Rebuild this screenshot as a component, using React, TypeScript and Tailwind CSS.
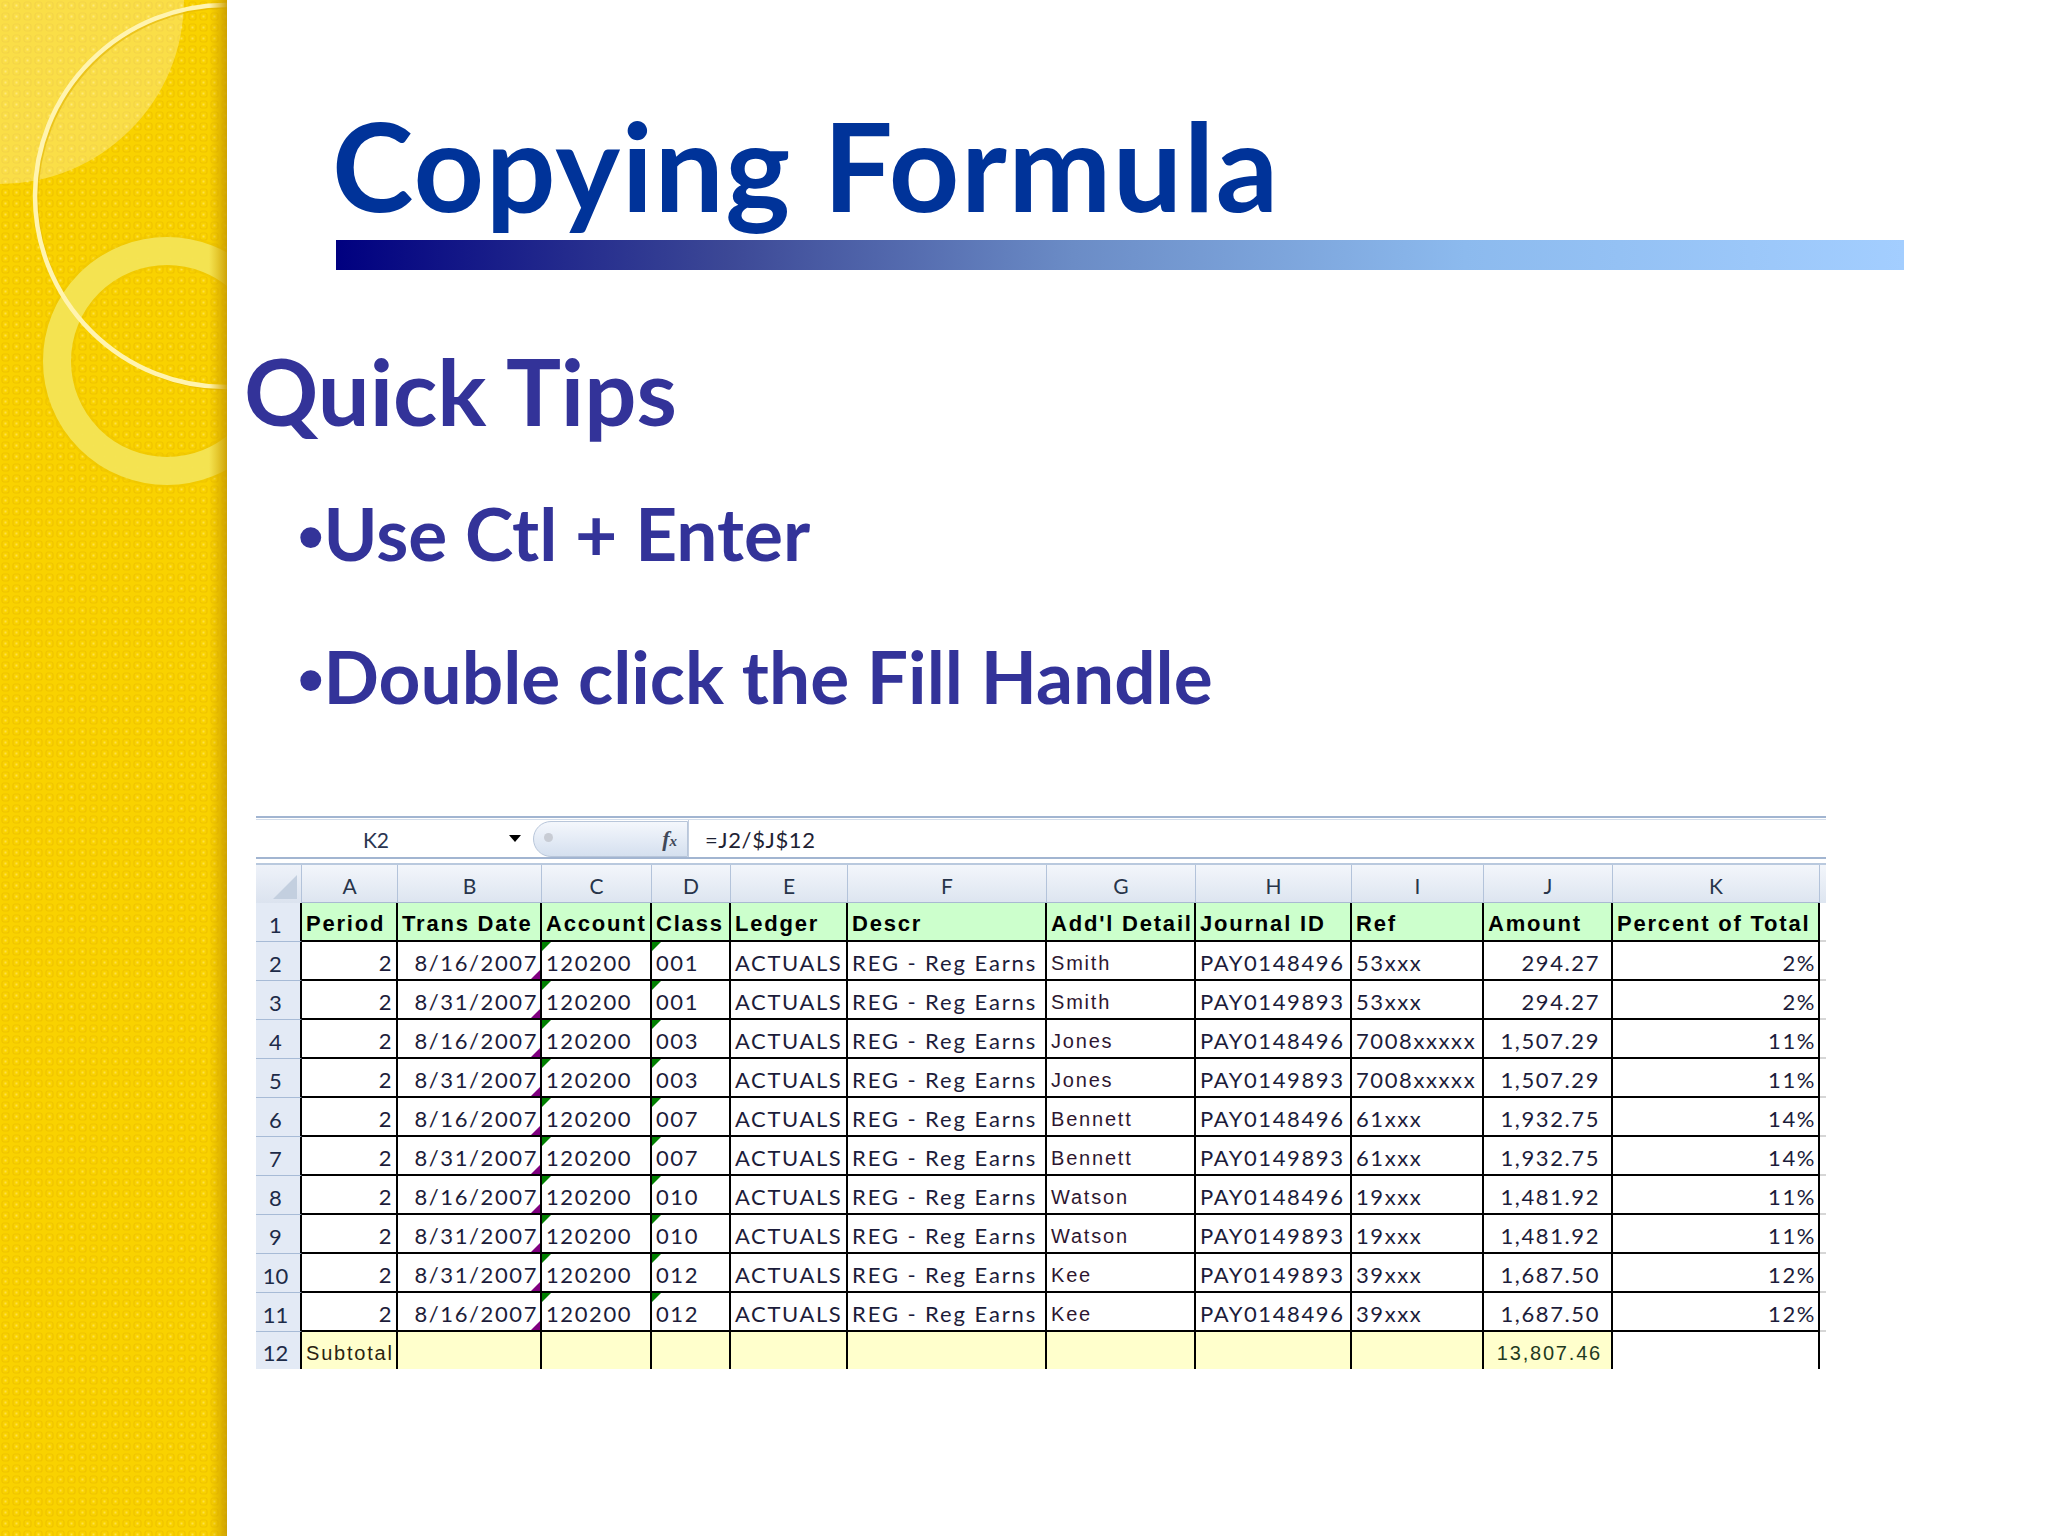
import clsx from "clsx";

type Row = {
  date: string;
  cls: string;
  detail: string;
  journal: string;
  ref: string;
  amount: string;
  pct: string;
};

const rows: Row[] = [
  { date: "8/16/2007", cls: "001", detail: "Smith", journal: "PAY0148496", ref: "53xxx", amount: "294.27", pct: "2%" },
  { date: "8/31/2007", cls: "001", detail: "Smith", journal: "PAY0149893", ref: "53xxx", amount: "294.27", pct: "2%" },
  { date: "8/16/2007", cls: "003", detail: "Jones", journal: "PAY0148496", ref: "7008xxxxx", amount: "1,507.29", pct: "11%" },
  { date: "8/31/2007", cls: "003", detail: "Jones", journal: "PAY0149893", ref: "7008xxxxx", amount: "1,507.29", pct: "11%" },
  { date: "8/16/2007", cls: "007", detail: "Bennett", journal: "PAY0148496", ref: "61xxx", amount: "1,932.75", pct: "14%" },
  { date: "8/31/2007", cls: "007", detail: "Bennett", journal: "PAY0149893", ref: "61xxx", amount: "1,932.75", pct: "14%" },
  { date: "8/16/2007", cls: "010", detail: "Watson", journal: "PAY0148496", ref: "19xxx", amount: "1,481.92", pct: "11%" },
  { date: "8/31/2007", cls: "010", detail: "Watson", journal: "PAY0149893", ref: "19xxx", amount: "1,481.92", pct: "11%" },
  { date: "8/31/2007", cls: "012", detail: "Kee", journal: "PAY0149893", ref: "39xxx", amount: "1,687.50", pct: "12%" },
  { date: "8/16/2007", cls: "012", detail: "Kee", journal: "PAY0148496", ref: "39xxx", amount: "1,687.50", pct: "12%" },
];

const headers = ["Period", "Trans Date", "Account", "Class", "Ledger", "Descr", "Add'l Detail", "Journal ID", "Ref", "Amount", "Percent of Total"];
const letters = ["A", "B", "C", "D", "E", "F", "G", "H", "I", "J", "K"];

const gridCols = "grid grid-cols-[46px_96px_144px_110px_79px_117px_199px_149px_156px_132px_129px_207px_6px]";

function Sidebar() {
  return (
    <div className="relative w-[227px] shrink-0 h-full bg-[#f8d000]">
      <svg width="227" height="1536" viewBox="0 0 227 1536" className="block">
        <defs>
          <pattern id="dots" width="11" height="11" patternUnits="userSpaceOnUse">
            <rect width="11" height="11" fill="#f9d200" />
            <rect x="2" y="2" width="7" height="7" rx="2" fill="none" stroke="#f0c400" strokeWidth="1.2" />
            <rect x="4.5" y="4.5" width="2" height="2" fill="#fde04a" />
          </pattern>
          <linearGradient id="edge" x1="0" x2="1" y1="0" y2="0">
            <stop offset="0" stopColor="#d9ab00" stopOpacity="0" />
            <stop offset="1" stopColor="#c99c00" stopOpacity="0.9" />
          </linearGradient>
        </defs>
        <rect width="227" height="1536" fill="url(#dots)" />
        <circle cx="0" cy="0" r="184" fill="#ffffff" opacity="0.28" />
        <circle cx="167" cy="361" r="110" fill="none" stroke="#eec700" strokeWidth="33" opacity="0.6" />
        <circle cx="167" cy="361" r="110" fill="none" stroke="#f4e65a" strokeWidth="28" opacity="0.9" />
        <circle cx="228" cy="198" r="191" fill="none" stroke="#e3b400" strokeWidth="3" opacity="0.6" />
        <circle cx="226" cy="196" r="191" fill="none" stroke="#fff4b0" strokeWidth="4.5" />
        <rect x="209" width="18" height="1536" fill="url(#edge)" />
      </svg>
    </div>
  );
}

function Triangle({ pos, color }: { pos: "tl" | "br"; color: string }) {
  return (
    <div
      className={clsx(
        "absolute w-[9px] h-[9px]",
        pos === "tl" ? "left-0 top-0 [clip-path:polygon(0_0,100%_0,0_100%)]" : "right-0 bottom-0 [clip-path:polygon(100%_0,100%_100%,0_100%)]",
        color
      )}
    />
  );
}

function Cell({
  children,
  right,
  last,
  className,
}: {
  children?: React.ReactNode;
  right?: boolean;
  last?: boolean;
  className?: string;
}) {
  return (
    <div
      className={clsx(
        "relative flex items-center overflow-hidden whitespace-nowrap border-r-2 border-black pl-[4px] pt-[4px]",
        !last && "border-b-2",
        right && "justify-end",
        className
      )}
    >
      {children}
    </div>
  );
}

function RowNum({ n, last }: { n: number; last?: boolean }) {
  return (
    <div
      className={clsx(
        "flex items-center justify-center pr-[5px] pt-[4px] bg-[#e3eaf5] border-r-2 border-r-black text-[22px] text-[#1d2b48] font-['Lato',sans-serif]",
        !last && "border-b border-b-[#a7bbd6]"
      )}
    >
      {n}
    </div>
  );
}

function Sheet() {
  const data = "font-['Lato',sans-serif] text-[22px] tracking-[1.6px] text-[#1c1c3a]";
  const tahoma = "font-['Liberation_Sans',Arial,sans-serif] text-[20px] tracking-[1.8px]";
  return (
    <div className="ml-[29px] w-[1570px] bg-white">
      {/* formula bar */}
      <div className="h-[4px] border-t-2 border-[#a2b5d1] border-b border-b-[#d2dcea]" />
      <div className="h-[37px] flex items-center font-['Lato',sans-serif]">
        <div className="w-[277px] h-full flex items-center">
          <span className="w-[240px] text-center text-[21px] text-[#2a3550] pt-[2px]">K2</span>
          <span className="ml-[13px] w-0 h-0 border-l-[6px] border-r-[6px] border-t-[7px] border-l-transparent border-r-transparent border-t-black" />
        </div>
        <div className="relative w-[155px] h-[36px] rounded-l-[20px] border border-[#b8c6da] bg-linear-to-b from-[#f4f7fc] to-[#d5e0ef] flex items-center justify-end pr-[10px]">
          <span className="absolute left-[10px] top-[11px] w-[9px] h-[9px] rounded-full bg-[#c8ccd4]" />
          <span className="font-['Liberation_Serif',serif] italic font-bold text-[22px] text-[#404858]">
            f<span className="text-[15px]">x</span>
          </span>
        </div>
        <div className="flex-1 h-full flex items-center pl-[16px] pt-[2px] border-l border-[#c2cee0] text-[22px] tracking-[0.6px] text-[#1e2233]">
          =J2/$J$12
        </div>
      </div>
      <div className="h-[8px] border-t-2 border-[#a2b5d1] border-b-2 border-b-[#b9c9de]" />

      {/* column letters */}
      <div className={clsx(gridCols, "h-[38px] font-['Lato',sans-serif] text-[21px] text-[#27344a]")}>
        <div className="relative bg-linear-to-b from-[#eef2f9] to-[#dbe3ef] border-r border-[#b3c3da]">
          <div className="absolute right-[4px] bottom-[4px] w-[24px] h-[24px] bg-[#c3cfdf] [clip-path:polygon(100%_0,100%_100%,0_100%)]" />
        </div>
        {letters.map((l) => (
          <div
            key={l}
            className="flex items-center justify-center pt-[4px] bg-linear-to-b from-[#f3f6fb] to-[#dde5f0] border-r border-[#b3c3da] border-b border-b-[#a9bad2]"
          >
            {l}
          </div>
        ))}
        <div className="bg-linear-to-b from-[#f3f6fb] to-[#dde5f0]" />
      </div>

      {/* row 1 headers */}
      <div className={clsx(gridCols, "h-[39px]")}>
        <RowNum n={1} />
        {headers.map((h) => (
          <Cell key={h} className="bg-[#ccffcc] font-bold text-[22px] tracking-[1.8px] text-black font-['Liberation_Sans',Arial,sans-serif]">
            {h}
          </Cell>
        ))}
        <div className="border-b-2 border-[#d6d6d6]" />
      </div>

      {rows.map((r, i) => (
        <div key={i} className={clsx(gridCols, "h-[39px]")}>
          <RowNum n={i + 2} />
          <Cell right className={clsx(data, "pr-[3px]")}>2</Cell>
          <Cell right className={clsx(data, "pr-[2px]")}>
            {r.date}
            <Triangle pos="br" color="bg-[#800080]" />
          </Cell>
          <Cell className={data}>
            <Triangle pos="tl" color="bg-[#008000]" />
            120200
          </Cell>
          <Cell className={data}>
            <Triangle pos="tl" color="bg-[#008000]" />
            {r.cls}
          </Cell>
          <Cell className={data}>ACTUALS</Cell>
          <Cell className={clsx(data, "tracking-[1.9px]")}>REG - Reg Earns</Cell>
          <Cell className={clsx(tahoma, "text-[#2e1630]")}>{r.detail}</Cell>
          <Cell className={data}>{r.journal}</Cell>
          <Cell className={data}>{r.ref}</Cell>
          <Cell right className={clsx(data, "pr-[11px]")}>{r.amount}</Cell>
          <Cell right className={clsx(data, "pr-[2px]")}>{r.pct}</Cell>
          <div className="border-b-2 border-[#d6d6d6]" />
        </div>
      ))}

      {/* subtotal */}
      <div className={clsx(gridCols, "h-[36px]")}>
        <RowNum n={12} last />
        <Cell last className={clsx(tahoma, "bg-[#ffffcc] text-[#2a2410] tracking-[1.4px]")}>Subtotal</Cell>
        <Cell last className="bg-[#ffffcc]" />
        <Cell last className="bg-[#ffffcc]" />
        <Cell last className="bg-[#ffffcc]" />
        <Cell last className="bg-[#ffffcc]" />
        <Cell last className="bg-[#ffffcc]" />
        <Cell last className="bg-[#ffffcc]" />
        <Cell last className="bg-[#ffffcc]" />
        <Cell last className="bg-[#ffffcc]" />
        <Cell last right className={clsx(tahoma, "bg-[#ffffcc] text-[#1f3a22] tracking-[1.2px] pr-[9px]")}>13,807.46</Cell>
        <Cell last />
        <div />
      </div>
    </div>
  );
}

function Bullet({ children, className }: { children: React.ReactNode; className?: string }) {
  return (
    <p className={clsx("ml-[71px] text-[73px] leading-none font-bold text-[#333399]", className)}>
      <span className="font-['Liberation_Sans',sans-serif] leading-[0]">•</span>
      {children}
    </p>
  );
}

export default function App() {
  return (
    <div className="w-[2048px] h-[1536px] flex bg-white overflow-hidden">
      <Sidebar />
      <div className="flex-1 flex flex-col font-['Lato',sans-serif]">
        <h1 className="ml-[105px] mt-[103px] text-[123px] leading-none font-bold tracking-[1.5px] text-[#003399]">
          Copying Formula
        </h1>
        <div className="ml-[109px] mt-[14px] w-[1568px] h-[30px] bg-[linear-gradient(to_right,#000080,#3c4896_25%,#6b8cc6_47%,#8cbaee_72%,#a3ceff)]" />
        <h2 className="ml-[17px] mt-[75px] text-[92px] leading-none font-bold text-[#333399]">Quick Tips</h2>
        <Bullet className="mt-[60px]">Use Ctl + Enter</Bullet>
        <Bullet className="mt-[70px]">Double click the Fill Handle</Bullet>
        <div className="mt-[103px]">
          <Sheet />
        </div>
      </div>
    </div>
  );
}
